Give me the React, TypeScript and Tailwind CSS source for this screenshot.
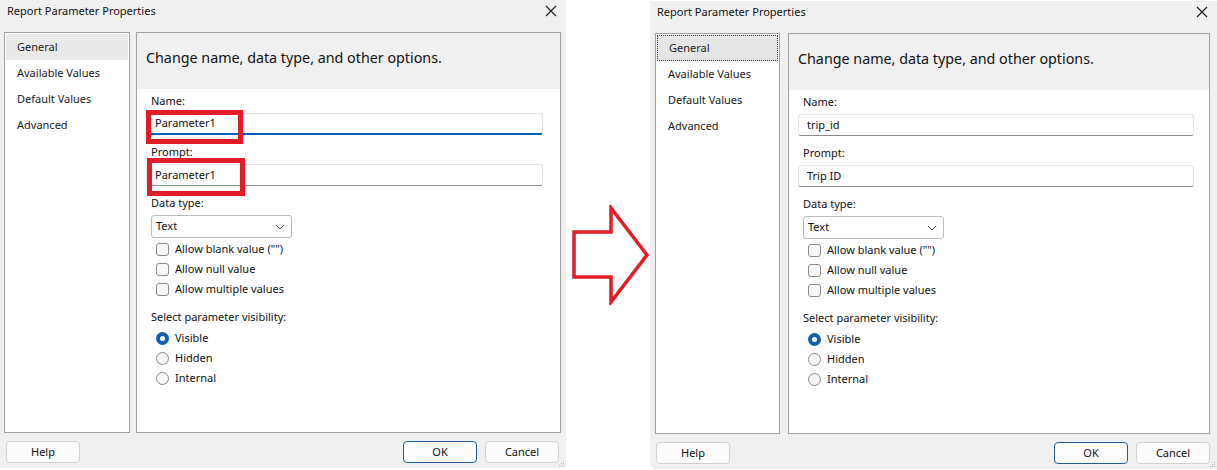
import React from "react";

const font = { fontFamily: '"Noto Sans", "Open Sans", sans-serif' };

function CloseX() {
  return (
    <svg width="12" height="12" viewBox="0 0 12 12" className="block">
      <path d="M1 1 L11 11 M11 1 L1 11" stroke="#1a1a1a" strokeWidth="1.1" fill="none" />
    </svg>
  );
}

function Chevron() {
  return (
    <svg width="10" height="6" viewBox="0 0 10 6" className="block">
      <path d="M1 1 L5 5 L9 1" stroke="#444" strokeWidth="1" fill="none" />
    </svg>
  );
}

function Grip() {
  return (
    <svg width="6" height="6" viewBox="0 0 6 6" className="block">
      <rect x="4" y="0" width="1" height="1" fill="#b5b5b5" />
      <rect x="2" y="2" width="1" height="1" fill="#b5b5b5" />
      <rect x="4" y="2" width="1" height="1" fill="#b5b5b5" />
      <rect x="0" y="4" width="1" height="1" fill="#b5b5b5" />
      <rect x="2" y="4" width="1" height="1" fill="#b5b5b5" />
      <rect x="4" y="4" width="1" height="1" fill="#b5b5b5" />
    </svg>
  );
}

function Checkbox({ label }: { label: string }) {
  return (
    <div className="flex h-[20px] items-center">
      <div className="ml-[5px] h-[13px] w-[13px] rounded-[3px] border border-[#8a8a8a] bg-[#f7f7f7]" />
      <span className="ml-[6px] text-[11px] text-[#111]">{label}</span>
    </div>
  );
}

function Radio({ label, checked }: { label: string; checked?: boolean }) {
  return (
    <div className="flex h-[20px] items-center">
      {checked ? (
        <div className="ml-[5px] flex h-[13px] w-[13px] items-center justify-center rounded-full bg-[#0f5fb0]">
          <div className="h-[5px] w-[5px] rounded-full bg-white" />
        </div>
      ) : (
        <div className="ml-[5px] h-[13px] w-[13px] rounded-full border border-[#8a8a8a] bg-[#f7f7f7]" />
      )}
      <span className="ml-[6px] text-[11px] text-[#111]">{label}</span>
    </div>
  );
}

function Dialog({ right }: { right?: boolean }) {
  const nav = ["General", "Available Values", "Default Values", "Advanced"];
  return (
    <div
      className={
        right
          ? "mt-[1px] flex h-[468px] w-[567px] flex-col rounded-bl-[6px] bg-[#f0f0f0]"
          : "flex h-[468px] w-[566px] flex-col bg-[#f0f0f0]"
      }
    >
      {/* title bar */}
      <div className="flex h-[32px] items-start justify-between pl-[7px] pr-[9px] pt-[3px]">
        <span className="text-[11px] leading-[16px] text-[#111]">Report Parameter Properties</span>
        <div className="mt-[2px]">
          <CloseX />
        </div>
      </div>
      {/* body */}
      <div className={right ? "flex h-[401px] gap-[8px] pl-[5px]" : "flex h-[401px] gap-[6px] pl-[4px]"}>
        {/* nav */}
        <div className={(right ? "w-[125px]" : "w-[126px]") + " border border-[#a0a0a0] bg-white p-[1px]"}>
          {nav.map((n, i) => (
            <div
              key={n}
              className={
                "flex h-[26px] items-center pl-[11px] text-[11px] text-[#1a1a1a] " +
                (i === 0
                  ? right
                    ? "border border-dotted border-[#333] bg-[#e6e6e6]"
                    : "bg-[#e9e9e9]"
                  : "")
              }
            >
              {n}
            </div>
          ))}
        </div>
        {/* content */}
        <div className={(right ? "w-[422px]" : "w-[425px]") + " relative flex flex-col border border-[#a0a0a0] bg-white"}>
          <div className="flex h-[56px] items-center bg-[#f0f0f0] pb-[7px] pl-[9px]">
            <span className="text-[14.3px] text-[#111]">Change name, data type, and other options.</span>
          </div>
          <div className="flex flex-col pl-[9px]">
            <div className="mt-[4px] h-[16px] pl-[5px] text-[11px] leading-[16px] text-[#111]">Name:</div>
            <div
              className={
                "mt-[4px] flex h-[22px] items-center rounded-[3px] border border-[#e3e3e3] pl-[8px] text-[11px] text-[#111] " +
                (right ? "w-[396px] border-b-[#8a8a8a]" : "w-[397px] border-b-2 border-b-[#005fb8]")
              }
            >
              {right ? "trip_id" : "Parameter1"}
            </div>
            <div className="mt-[9px] h-[16px] pl-[5px] text-[11px] leading-[16px] text-[#111]">Prompt:</div>
            <div
              className={
                "mt-[4px] flex h-[22px] items-center rounded-[3px] border border-[#e3e3e3] border-b-[#8a8a8a] pl-[8px] text-[11px] text-[#111] " +
                (right ? "w-[396px]" : "w-[397px]")
              }
            >
              {right ? "Trip ID" : "Parameter1"}
            </div>
            <div className="mt-[9px] h-[16px] pl-[5px] text-[11px] leading-[16px] text-[#111]">Data type:</div>
            <div className="ml-[5px] mt-[4px] flex h-[23px] w-[141px] items-center justify-between rounded-[3px] border border-[#bdbdbd] bg-white pl-[4px] pr-[6px] text-[11px] text-[#111]">
              <span>Text</span>
              <Chevron />
            </div>
            <div className="mt-[1px] flex flex-col pl-[5px]">
              <Checkbox label={'Allow blank value ("")'} />
              <Checkbox label="Allow null value" />
              <Checkbox label="Allow multiple values" />
            </div>
            <div className="mt-[10px] h-[16px] pl-[5px] text-[11px] leading-[16px] text-[#111]">
              Select parameter visibility:
            </div>
            <div className="mt-[3px] flex flex-col pl-[5px]">
              <Radio label="Visible" checked />
              <Radio label="Hidden" />
              <Radio label="Internal" />
            </div>
          </div>
          {!right && (
            <>
              <div className="absolute left-[9px] top-[77px] h-[34px] w-[97px] border-[5px] border-[#e11d27]" />
              <div className="absolute left-[10px] top-[125px] h-[38px] w-[98px] border-[5px] border-[#e11d27]" />
            </>
          )}
        </div>
      </div>
      {/* footer */}
      <div className="relative flex flex-1 items-start pl-[6px] pr-[7px] pt-[8px]">
        <div className="flex h-[22px] w-[74px] items-center justify-center rounded-[4px] border border-[#d0d0d0] bg-[#fbfbfb] text-[11px] text-[#111]">
          Help
        </div>
        <div className="flex-1" />
        <div className="flex h-[22px] w-[74px] items-center justify-center rounded-[4px] border border-[#1f5f94] bg-[#fdfdfd] text-[11px] text-[#111]">
          OK
        </div>
        <div className="ml-[8px] flex h-[22px] w-[74px] items-center justify-center rounded-[4px] border border-[#d0d0d0] bg-[#fbfbfb] text-[11px] text-[#111]">
          Cancel
        </div>
        <div className="absolute bottom-[1px] right-[1px]">
          <Grip />
        </div>
      </div>
    </div>
  );
}

function Arrow() {
  return (
    <svg width="84" height="100" viewBox="0 0 84 100" className="block">
      <path
        d="M8 27 L45 27 L45 3 L81 50 L45 97 L45 72 L8 72 Z"
        fill="white"
        stroke="#e11d27"
        strokeWidth="3.5"
        strokeLinejoin="miter"
      />
    </svg>
  );
}

export default function App() {
  return (
    <div className="flex h-[470px] w-[1217px] overflow-hidden bg-white" style={font}>
      <Dialog />
      <div className="flex w-[84px] items-start pt-[205px]">
        <Arrow />
      </div>
      <Dialog right />
    </div>
  );
}
